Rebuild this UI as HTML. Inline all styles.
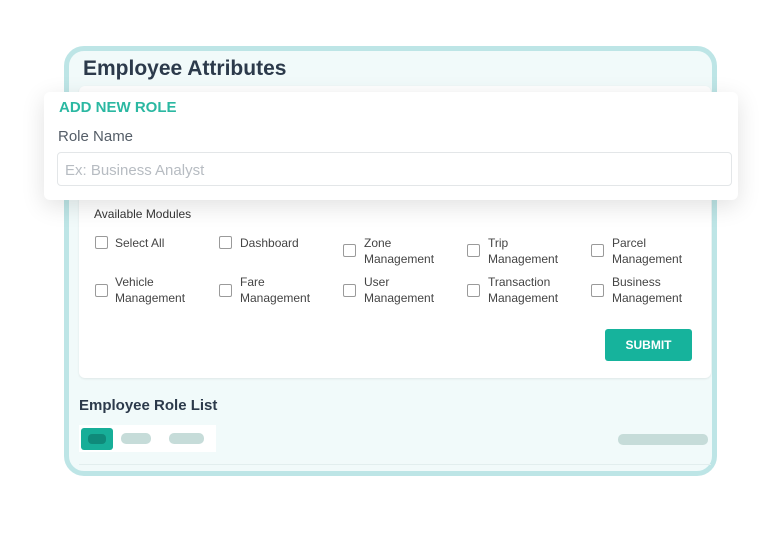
<!DOCTYPE html>
<html><head><style>
body{margin:0;width:781px;height:541px;background:#fff;position:relative;overflow:hidden;font-family:"Liberation Sans",sans-serif;}
.frame{position:absolute;left:64px;top:46px;width:643px;height:420px;border:5px solid #bde5e6;border-radius:20px;background:#f1fafa;overflow:hidden}
.title{position:absolute;left:83px;top:57px;font-size:21px;font-weight:bold;color:#2c3a4b}
.card{position:absolute;left:79px;top:86px;width:632px;height:292px;background:#fff;border-radius:6px;box-shadow:0 1px 2px rgba(0,0,0,.08)}
.pop{position:absolute;left:44px;top:92px;width:694px;height:108px;background:#fff;border-radius:6px;box-shadow:0 6px 24px rgba(0,0,0,.12)}
.add{position:absolute;left:59px;top:99px;font-size:15px;font-weight:bold;color:#2bb8a2}
.rn{position:absolute;left:58px;top:128px;font-size:15px;color:#555e68}
.inp{position:absolute;left:57px;top:152px;height:34px;border:1px solid #e3e6e8;border-radius:4px;font-size:15px;color:#b7bcc2;line-height:35px;padding-left:7px;box-sizing:border-box;width:675px}
.am{position:absolute;left:94px;top:207px;font-size:12px;color:#333}
.cb{position:absolute;width:11px;height:11px;border:1px solid #9a9a9a;border-radius:2px}
.lb{position:absolute;font-size:12px;color:#444;line-height:16px}
.sub{position:absolute;left:605px;top:329px;width:87px;height:32px;background:#16b39c;border-radius:3px;color:#fff;font-size:12px;font-weight:bold;text-align:center;line-height:32px}
.erl{position:absolute;left:79px;top:397px;font-size:15px;font-weight:bold;color:#2c3a4b}
.pill{position:absolute;border-radius:5px;background:#c6dcd9}
</style></head><body>
<div class="frame"></div>
<div class="title">Employee Attributes</div>
<div class="card"></div>
<div class="pop"></div>
<div class="add">ADD NEW ROLE</div>
<div class="rn">Role Name</div>
<div class="inp">Ex: Business Analyst</div>
<div class="am">Available Modules</div>
<div class="cb" style="left:95px;top:236px"></div><div class="lb" style="left:115px;top:235px">Select All</div>
<div class="cb" style="left:219px;top:236px"></div><div class="lb" style="left:240px;top:235px">Dashboard</div>
<div class="cb" style="left:343px;top:244px"></div><div class="lb" style="left:364px;top:235px">Zone<br>Management</div>
<div class="cb" style="left:467px;top:244px"></div><div class="lb" style="left:488px;top:235px">Trip<br>Management</div>
<div class="cb" style="left:591px;top:244px"></div><div class="lb" style="left:612px;top:235px">Parcel<br>Management</div>
<div class="cb" style="left:95px;top:284px"></div><div class="lb" style="left:115px;top:274px">Vehicle<br>Management</div>
<div class="cb" style="left:219px;top:284px"></div><div class="lb" style="left:240px;top:274px">Fare<br>Management</div>
<div class="cb" style="left:343px;top:284px"></div><div class="lb" style="left:364px;top:274px">User<br>Management</div>
<div class="cb" style="left:467px;top:284px"></div><div class="lb" style="left:488px;top:274px">Transaction<br>Management</div>
<div class="cb" style="left:591px;top:284px"></div><div class="lb" style="left:612px;top:274px">Business<br>Management</div>
<div class="sub">SUBMIT</div>
<div class="erl">Employee Role List</div>
<div style="position:absolute;left:79px;top:425px;width:137px;height:27px;background:#fff"></div>
<div style="position:absolute;left:81px;top:428px;width:32px;height:22px;background:#17ae98;border-radius:3px"></div>
<div style="position:absolute;left:88px;top:434px;width:18px;height:10px;background:#0f8a7a;border-radius:4px"></div>
<div class="pill" style="left:121px;top:433px;width:30px;height:11px"></div>
<div class="pill" style="left:169px;top:433px;width:35px;height:11px"></div>
<div class="pill" style="left:618px;top:434px;width:90px;height:11px"></div>
<div style="position:absolute;left:79px;top:464px;width:632px;height:1px;background:#e2eeee"></div>
</body></html>
